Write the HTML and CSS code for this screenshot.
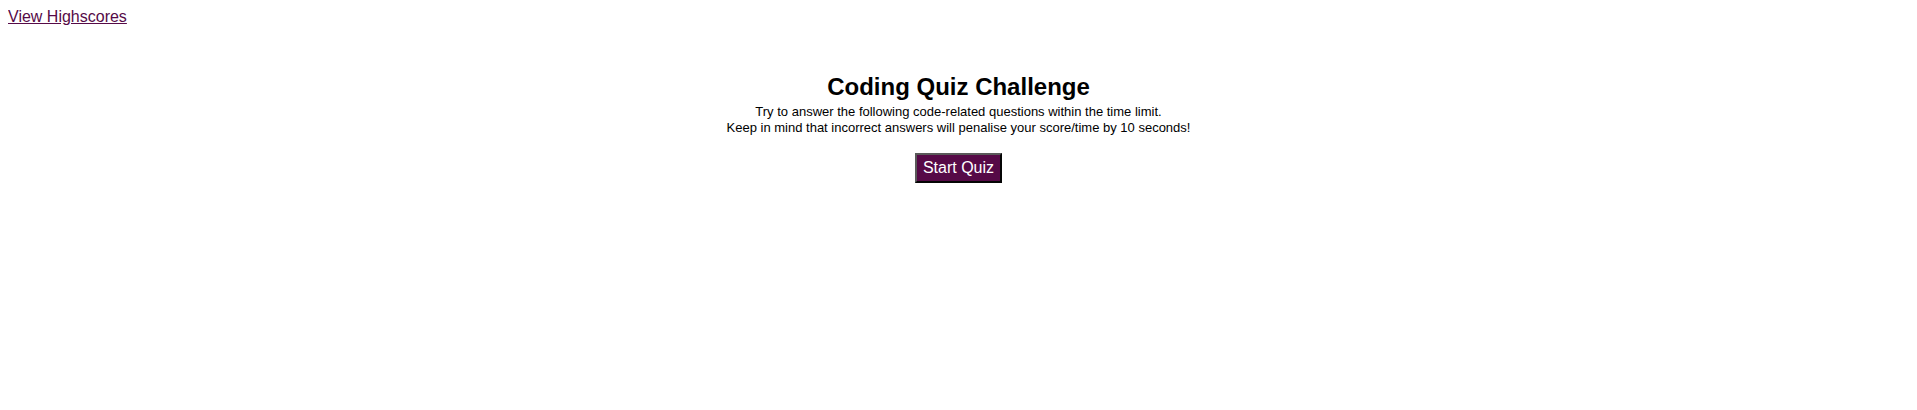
FILE: index.html
```html
<!DOCTYPE html>
<html lang="en">
<head>
<meta charset="utf-8">
<title>Coding Quiz Challenge</title>
<link rel="stylesheet" href="styles.css">
</head>
<body>
<header class="topbar">
  <a class="scores-link" href="#">View Highscores</a>
</header>
<main class="intro">
  <h1 class="intro-title">Coding Quiz Challenge</h1>
  <p class="intro-text">Try to answer the following code-related questions within the time limit.<br>Keep in mind that incorrect answers will penalise your score/time by 10 seconds!</p>
  <button class="start-btn" type="button">Start Quiz</button>
</main>
</body>
</html>
```
FILE: styles.css
```css
html, body {
  background: #ffffff;
}
body {
  margin: 8px;
  font-family: "Liberation Sans", Arial, sans-serif;
  color: #000;
}
.topbar {
  display: flex;
}
.scores-link {
  font-size: 16px;
  line-height: 18px;
  color: #560a47;
}
.intro {
  display: flex;
  flex-direction: column;
  align-items: center;
  margin-top: 47px;
}
.intro-title {
  font-size: 24px;
  font-weight: bold;
  margin: 0;
  line-height: 28px;
}
.intro-text {
  font-size: 13px;
  line-height: 16px;
  text-align: center;
  margin: 3px 0 17px;
}
.start-btn {
  font-family: "Liberation Sans", Arial, sans-serif;
  font-size: 16px;
  line-height: 18px;
  color: #fff;
  background: #560a47;
  border: 2px outset #5a5a5a;
  padding: 4px 6px;
}
```
